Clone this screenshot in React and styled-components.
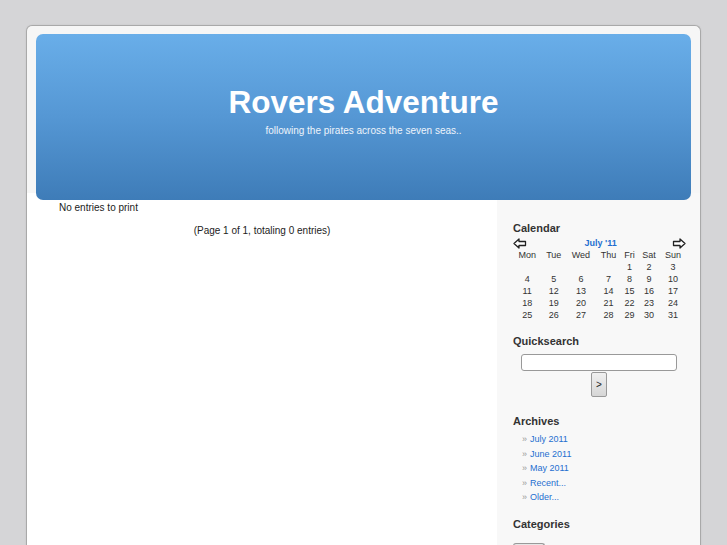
import React from "react";
import styled, { createGlobalStyle } from "styled-components";

const Global = createGlobalStyle`
  html, body { margin: 0; padding: 0; background: #d5d5d7; }
  body { font-family: "Liberation Sans", Arial, sans-serif; color: #222; }
`;

const Page = styled.div`
  margin: 25px 0 0 26px;
  width: 673px;
  height: 520px;
  border: 1px solid #a9a9a9;
  border-bottom: none;
  border-radius: 6px 6px 0 0;
  background: #f6f6f6;
  display: flex;
  flex-direction: column;
  overflow: hidden;
  box-shadow: 0 0 2px rgba(0,0,0,0.08);
`;

const Header = styled.header`
  flex-shrink: 0;
  margin: 8px 9px 0 9px;
  height: 166px;
  border-radius: 7px;
  background: linear-gradient(to bottom, #69aee9 0%, #5597d4 50%, #3e7cb8 100%);
  display: flex;
  flex-direction: column;
  align-items: center;
  padding-top: 52px;
  box-sizing: border-box;
  color: #fff;
  position: relative;
  z-index: 1;
`;

const Title = styled.h1`
  margin: 0;
  font-size: 31.5px;
  line-height: 32px;
  font-weight: bold;
`;

const Tagline = styled.div`
  margin-top: 7px;
  font-size: 10px;
  color: #eef4fb;
`;

const Body = styled.div`
  display: flex;
  flex: 1;
  margin-top: -7px;
`;

const Main = styled.main`
  width: 470px;
  background: #fff;
  padding-top: 7px;
  font-size: 10px;
  color: #222;
`;

const NoEntries = styled.div`
  padding-left: 32px;
  margin-top: 1px;
  line-height: 13px;
`;

const Footer = styled.div`
  text-align: center;
  margin-top: 10px;
  line-height: 13px;
`;

const Sidebar = styled.aside`
  flex: 1;
  background: #f8f8f8;
  padding: 29px 0 0 16px;
  font-size: 10px;
`;

const Heading = styled.h3`
  margin: 0 0 ${(p) => p.$mb ?? 4}px 0;
  font-size: 11px;
  font-weight: bold;
  color: #333;
  line-height: 13px;
`;

const Section = styled.section`
  margin-bottom: ${(p) => p.$mb || 18}px;
`;

const CalTable = styled.table`
  width: 173px;
  border-collapse: collapse;
  font-size: 9px;
  color: #333;
  td, th {
    padding: 0;
    text-align: center;
    height: 12px;
    line-height: 12px;
    font-weight: normal;
  }
`;

const MonthCell = styled.td`
  color: #1f6fd0;
  font-weight: bold !important;
  font-size: 9px;
`;

const ArrowCell = styled.td`
  height: 13px !important;
`;

const ArrowBox = styled.div`
  display: flex;
  justify-content: ${(p) => (p.$right ? "flex-end" : "flex-start")};
  padding-top: 1px;
`;

const SearchForm = styled.form`
  display: flex;
  flex-direction: column;
  align-items: center;
  margin: 0;
  padding-right: 16px;
`;

const SearchInput = styled.input`
  width: 156px;
  height: 17px;
  box-sizing: border-box;
  border: 1px solid #999;
  border-radius: 3px;
  background: #fff;
  margin: 2px 0 1px 8px;
  align-self: flex-start;
`;

const GoButton = styled.button`
  width: 16px;
  height: 25px;
  padding: 0;
  border: 1px solid #999;
  border-radius: 2px;
  background: linear-gradient(#f0f0f0, #d6d6d6);
  font-size: 10px;
  font-family: "Liberation Sans", Arial, sans-serif;
  color: #222;
  margin-left: 1px;
`;

const List = styled.ul`
  list-style: none;
  margin: 0;
  padding: 0 0 0 9px;
`;

const Item = styled.li`
  line-height: 14.5px;
  font-size: 9px;
  &::before {
    content: "»";
    color: #999;
    margin-right: 3px;
  }
`;

const Link = styled.a`
  color: #1f6fd0;
  text-decoration: none;
`;

const CatBox = styled.div`
  width: 30px;
  height: 4px;
  margin-top: 12px;
  border: 1px solid #999;
  border-bottom: none;
  border-radius: 3px 3px 0 0;
  background: #e6e6e6;
`;

const Arrow = ({ dir }) => (
  <svg width="14" height="11" viewBox="0 0 14 11" style={{ display: "block", transform: dir === "right" ? "scaleX(-1)" : "none" }}>
    <path d="M1 5.5 L6 1 L6 3.5 L12.5 3.5 L12.5 7.5 L6 7.5 L6 10 Z" fill="#fff" stroke="#222" strokeWidth="1.3" strokeLinejoin="round" />
  </svg>
);

const weeks = [
  ["", "", "", "", "1", "2", "3"],
  ["4", "5", "6", "7", "8", "9", "10"],
  ["11", "12", "13", "14", "15", "16", "17"],
  ["18", "19", "20", "21", "22", "23", "24"],
  ["25", "26", "27", "28", "29", "30", "31"],
];

export default function App() {
  return (
    <>
      <Global />
      <Page>
        <Header>
          <Title>Rovers Adventure</Title>
          <Tagline>following the pirates across the seven seas..</Tagline>
        </Header>
        <Body>
          <Main>
            <NoEntries>No entries to print</NoEntries>
            <Footer>(Page 1 of 1, totaling 0 entries)</Footer>
          </Main>
          <Sidebar>
            <Section $mb={14}>
              <Heading $mb={1}>Calendar</Heading>
              <CalTable>
                <tbody>
                  <tr>
                    <ArrowCell><ArrowBox><Arrow dir="left" /></ArrowBox></ArrowCell>
                    <MonthCell colSpan={5}>July '11</MonthCell>
                    <ArrowCell><ArrowBox $right><Arrow dir="right" /></ArrowBox></ArrowCell>
                  </tr>
                  <tr>
                    {["Mon", "Tue", "Wed", "Thu", "Fri", "Sat", "Sun"].map((d) => (
                      <th key={d}>{d}</th>
                    ))}
                  </tr>
                  {weeks.map((w, i) => (
                    <tr key={i}>
                      {w.map((d, j) => (
                        <td key={j}>{d}</td>
                      ))}
                    </tr>
                  ))}
                </tbody>
              </CalTable>
            </Section>
            <Section $mb={18}>
              <Heading>Quicksearch</Heading>
              <SearchForm onSubmit={(e) => e.preventDefault()}>
                <SearchInput type="text" />
                <GoButton type="submit">&gt;</GoButton>
              </SearchForm>
            </Section>
            <Section $mb={13}>
              <Heading>Archives</Heading>
              <List>
                <Item><Link href="#">July 2011</Link></Item>
                <Item><Link href="#">June 2011</Link></Item>
                <Item><Link href="#">May 2011</Link></Item>
                <Item><Link href="#">Recent...</Link></Item>
                <Item><Link href="#">Older...</Link></Item>
              </List>
            </Section>
            <Section>
              <Heading>Categories</Heading>
              <CatBox />
            </Section>
          </Sidebar>
        </Body>
      </Page>
    </>
  );
}
